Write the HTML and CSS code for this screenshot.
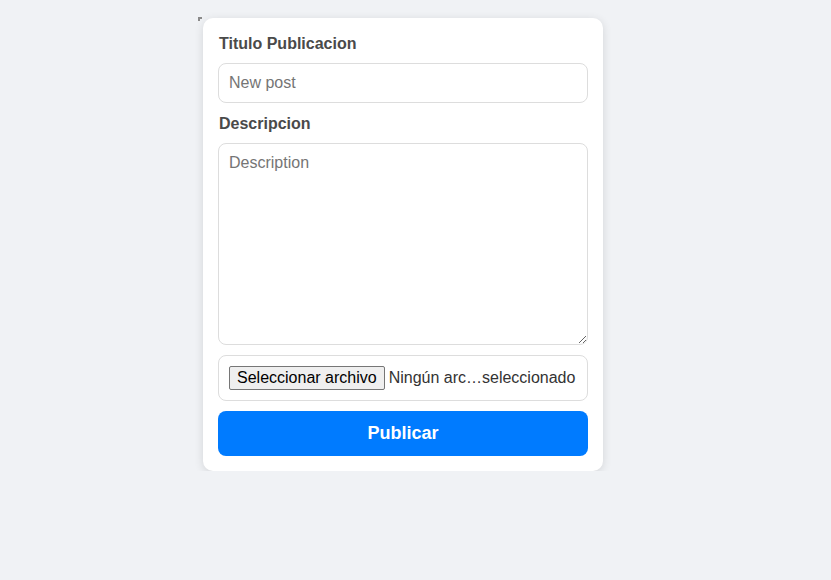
FILE: index.html
```html
<!DOCTYPE html>
<html lang="es">
<head>
<meta charset="utf-8">
<title>Publicar</title>
<link rel="stylesheet" href="styles.css">
</head>
<body>
<div class="wrap">
  <span class="mark"></span>
  <form class="card">
    <label class="lbl" for="t">Titulo Publicacion</label>
    <input id="t" class="field" type="text" placeholder="New post">
    <label class="lbl" for="d">Descripcion</label>
    <textarea id="d" class="field area" placeholder="Description"></textarea>
    <div class="field file">
      <span class="file-btn">Seleccionar archivo</span><span class="file-txt">Ningún arc…seleccionado</span>
    </div>
    <button class="submit" type="button">Publicar</button>
  </form>
</div>
</body>
</html>
```
FILE: styles.css
```css
* { box-sizing: border-box; }
body {
  margin: 0;
  background: #f0f2f5;
  font-family: "Liberation Sans", Arial, sans-serif;
}
.wrap {
  position: relative;
  width: 400px;
  margin: 18px 0 0 203px;
}
.mark {
  position: absolute;
  left: -5px;
  top: -1px;
  width: 4px;
  height: 4px;
  border-top: 2px solid #8a8a8a;
  border-left: 2px solid #8a8a8a;
}
.card {
  background: #fff;
  border-radius: 10px;
  box-shadow: 0 2px 10px rgba(0, 0, 0, 0.12);
  padding: 15px;
  display: flex;
  flex-direction: column;
}
.lbl {
  display: block;
  font-weight: bold;
  font-size: 16px;
  color: #4a4a4a;
  margin: 2px 0 10px 1px;
  line-height: 18px;
}
.field {
  display: block;
  width: 100%;
  border: 1px solid #ddd;
  border-radius: 8px;
  padding: 10px;
  font-family: "Liberation Sans", Arial, sans-serif;
  font-size: 16px;
  margin: 0 0 10px;
  color: #333;
  background: #fff;
}
input.field { height: 40px; }
.field::placeholder { color: #757575; }
.area {
  height: 202px;
  resize: vertical;
}
.file {
  height: 46px;
  display: flex;
  align-items: center;
  white-space: nowrap;
}
.file-btn {
  display: inline-block;
  background: #efefef;
  border: 1px solid #767676;
  border-radius: 2px;
  padding: 2px 7px;
  color: #000;
  line-height: 18px;
  margin-right: 4px;
}
.file-txt { color: #333; }
.submit {
  display: block;
  width: 100%;
  height: 45px;
  border: 0;
  border-radius: 8px;
  background: #007bff;
  color: #fff;
  font-family: "Liberation Sans", Arial, sans-serif;
  font-weight: bold;
  font-size: 18px;
}
```
